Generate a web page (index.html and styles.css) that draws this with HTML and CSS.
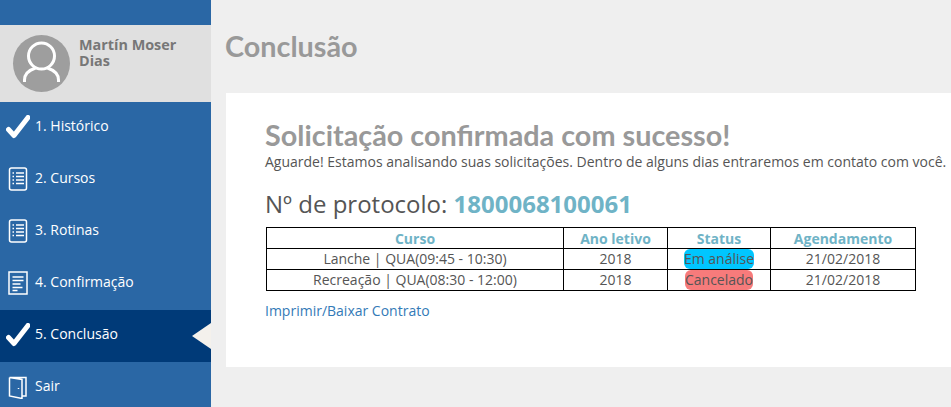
FILE: index.html
```html
<!DOCTYPE html>
<html lang="pt-BR">
<head>
  <meta charset="UTF-8">
  <meta name="viewport" content="width=device-width, initial-scale=1.0">
  <title>Conclusão</title>
  <link rel="stylesheet" href="styles.css">
</head>
<body>
  <aside class="sidebar">
    <div class="user-box">
      <div class="avatar">
        <svg viewBox="0 0 57 57" width="57" height="57" fill="none" stroke="#fff" stroke-width="3">
          <circle cx="28.5" cy="21" r="13"/>
          <path d="M11.5 47v-2c0-6 5-10 11-12M45.500 47v-2c0-6-5-10-11-12"/>
        </svg>
      </div>
      <div class="user-name">Martín Moser Dias</div>
    </div>
    <nav class="menu">
      <a class="menu-item">
        <svg class="icon" viewBox="0 0 24 24" width="24" height="24"><path class="check" d="M2.500 14.500l5.500 6L22 2.500"/></svg>
        <span>1. Histórico</span>
      </a>
      <a class="menu-item">
        <svg class="icon" viewBox="0 0 24 24" width="24" height="24"><rect class="line" x="3.500" y="1" width="17" height="22" rx="2"/><path class="line" d="M10 6h8M10 9.500h8M10 13h8M10 16.500h8M6.500 6h1.500M6.500 9.500h1.500M6.500 13h1.500M6.500 16.500h1.500"/></svg>
        <span>2. Cursos</span>
      </a>
      <a class="menu-item">
        <svg class="icon" viewBox="0 0 24 24" width="24" height="24"><rect class="line" x="3.500" y="1" width="17" height="22" rx="2"/><path class="line" d="M10 6h8M10 9.500h8M10 13h8M10 16.500h8M6.500 6h1.500M6.500 9.500h1.500M6.500 13h1.500M6.500 16.500h1.500"/></svg>
        <span>3. Rotinas</span>
      </a>
      <a class="menu-item">
        <svg class="icon" viewBox="0 0 24 24" width="24" height="24"><rect class="line" x="3" y="1" width="18" height="22"/><path class="line" d="M6.500 6h11M6.500 9.500h11M6.500 13h8M6.500 16.500h10M6.500 19.500h5"/></svg>
        <span>4. Confirmação</span>
      </a>
      <a class="menu-item active">
        <svg class="icon" viewBox="0 0 24 24" width="24" height="24"><path class="check" d="M2.500 14.500l5.500 6L22 2.500"/></svg>
        <span>5. Conclusão</span>
      </a>
      <a class="menu-item">
        <svg class="icon" viewBox="0 0 24 24" width="24" height="24"><path class="line" d="M3.500 2.500h16.500v18.500h-4M3.500 2.500v18.500l12.500 2.500V4.500L3.500 2.500"/><path class="line" d="M12.500 13v1"/></svg>
        <span>Sair</span>
      </a>
    </nav>
  </aside>

  <main class="content">
    <h1 class="page-title">Conclusão</h1>
    <section class="card">
      <h2 class="card-title">Solicitação confirmada com sucesso!</h2>
      <p class="card-text">Aguarde! Estamos analisando suas solicitações. Dentro de alguns dias entraremos em contato com você.</p>
      <h3 class="protocol">Nº de protocolo: <strong>1800068100061</strong></h3>
      <table class="requests">
        <thead>
          <tr>
            <th class="col-curso">Curso</th>
            <th class="col-ano">Ano letivo</th>
            <th class="col-status">Status</th>
            <th class="col-data">Agendamento</th>
          </tr>
        </thead>
        <tbody>
          <tr>
            <td>Lanche | QUA(09:45 - 10:30)</td>
            <td>2018</td>
            <td><span class="badge badge-analise">Em análise</span></td>
            <td>21/02/2018</td>
          </tr>
          <tr>
            <td>Recreação | QUA(08:30 - 12:00)</td>
            <td>2018</td>
            <td><span class="badge badge-cancelado">Cancelado</span></td>
            <td>21/02/2018</td>
          </tr>
        </tbody>
      </table>
      <a class="contract-link" href="#">Imprimir/Baixar Contrato</a>
    </section>
  </main>
</body>
</html>
```

FILE: styles.css
```css
* { box-sizing: border-box; margin: 0; padding: 0; }
html, body { height: 100%; }
body { display: flex; overflow: hidden; background: #efefef; color: #555; font-family: 'Open Sans', sans-serif; font-size: 14px; }

/* Menu lateral */
.sidebar { flex: 0 0 211px; background: #2a67a5; padding-top: 25px; }
.user-box { display: flex; height: 77px; padding: 10px 0 0 13px; background: #e0e0e0; }
.avatar { flex: 0 0 57px; width: 57px; height: 57px; border-radius: 50%; background: #9e9e9e; overflow: hidden; }
.user-name { margin: 2px 0 0 9px; width: 110px; color: #777; font-size: 14.4px; font-weight: 700; line-height: 16px; }

.menu-item { display: flex; align-items: center; gap: 5px; height: 52px; padding: 0 0 2px 6px; color: #fff; font-size: 14px; position: relative; }
.menu-item span { position: relative; top: -2px; }
.menu-item.active { background: #003a78; }
.menu-item.active::after { content: ''; position: absolute; right: 0; top: 50%; margin-top: -13px; border: 13px solid transparent; border-left: 0; border-right: 19px solid #f4f1ec; }
.icon { flex: 0 0 24px; }
.check { fill: none; stroke: #fff; stroke-width: 5; stroke-linejoin: round; stroke-linecap: round; }
.line { fill: none; stroke: #fff; stroke-width: 1.500; }

/* Conteúdo */
.content { flex: 1; min-width: 0; padding: 28px 0 0 15px; }
.page-title { height: 65px; margin-left: -1px; color: #999; font-family: Lato, sans-serif; font-size: 28.800px; font-weight: 700; line-height: 36px; }
.card { height: 274px; padding: 26px 0 0 39px; background: #fff; }
.card-title { color: #999; font-family: Lato, sans-serif; font-size: 28.800px; font-weight: 700; line-height: 32px; }
.card-text { line-height: 17px; white-space: nowrap; margin-top: 2px; }
.protocol { margin-top: 18px; font-size: 24px; font-weight: 400; line-height: 32px; }
.protocol strong { color: #6fb3c6; font-weight: 700; }

.requests { width: 649px; margin: 7px 0 0 1px; border-collapse: collapse; table-layout: fixed; text-align: center; }
.requests th, .requests td { height: 21px; border: 1px solid #000; line-height: 19px; padding: 0; }
.requests td { padding-bottom: 1px; }
.requests th { color: #6fb3c6; font-size: 14px; font-weight: 700; }
.col-curso { width: 297px; }
.col-ano { width: 104px; }
.col-status { width: 103px; }
.col-data { width: 145px; }

.badge { display: inline-block; padding-bottom: 1px; margin-bottom: -1px; border-radius: 6px; line-height: 19px; vertical-align: top; }
.badge-analise { background: #00c6ff; }
.badge-cancelado { background: #f77b7b; }

.contract-link { display: inline-block; margin-top: 10px; color: #337ab7; text-decoration: none; }
```
